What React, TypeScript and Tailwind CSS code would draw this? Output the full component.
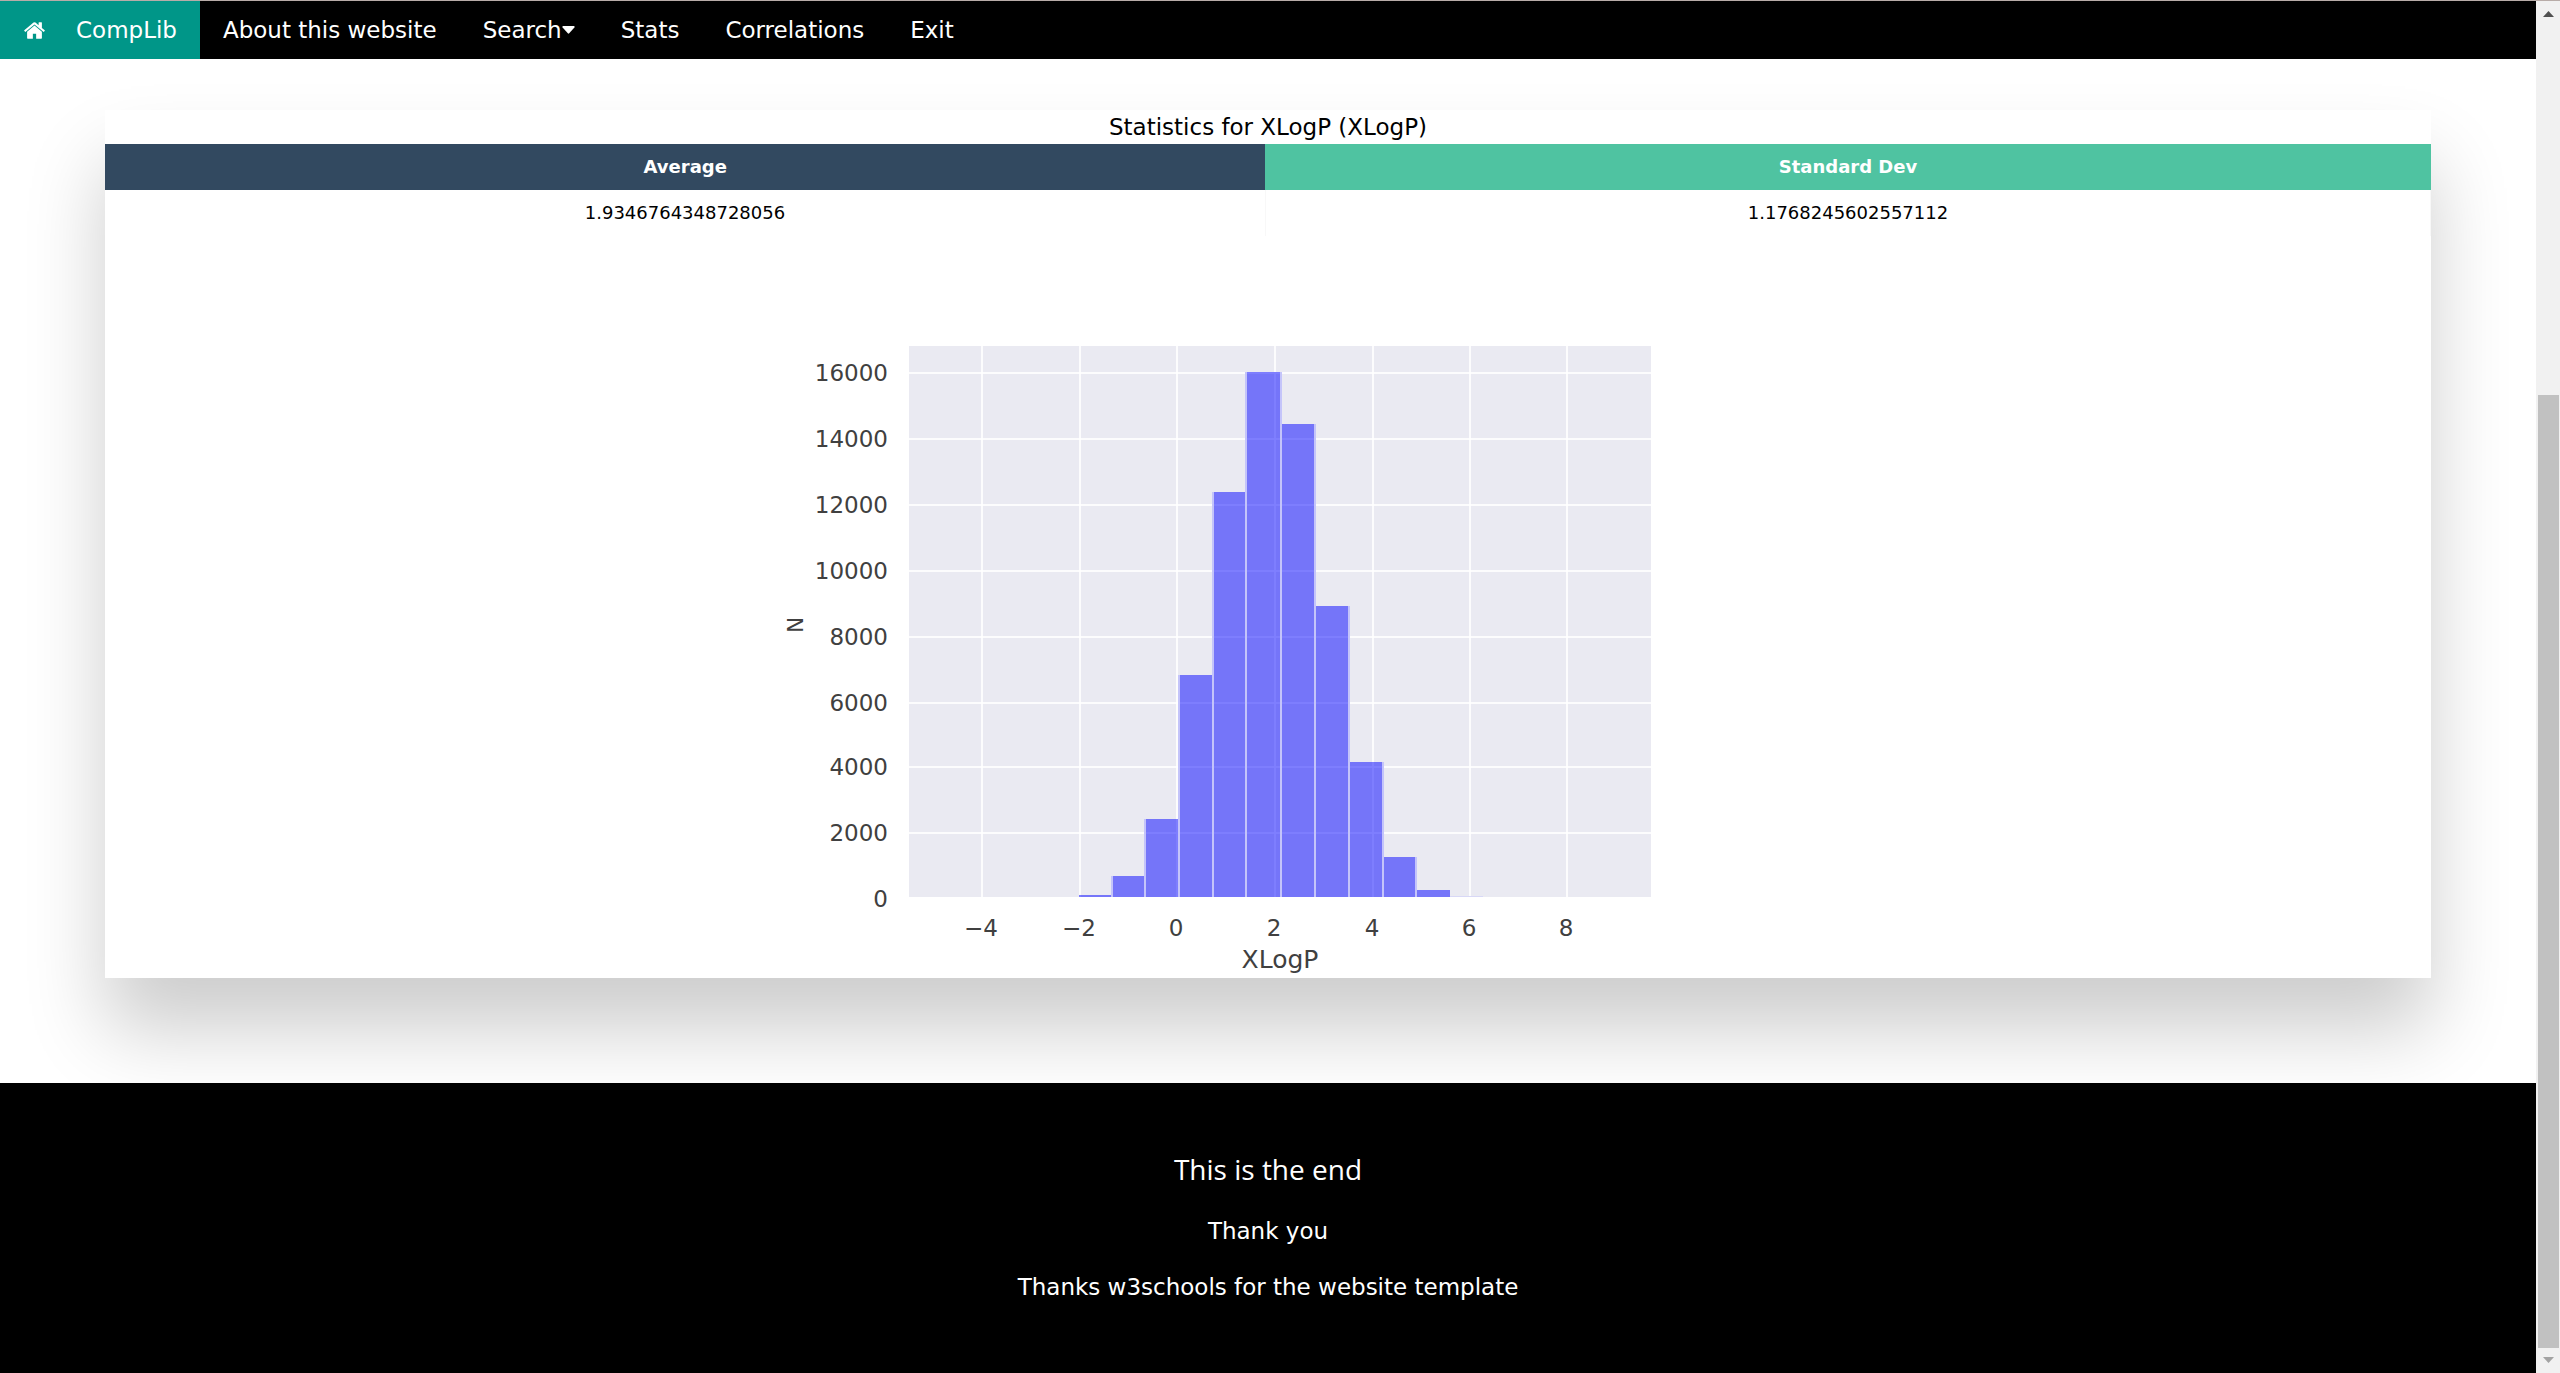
const barData = [
  { left: 291, right: 324, top: 636 },
  { left: 324, right: 357, top: 617 },
  { left: 357, right: 391, top: 560 },
  { left: 391, right: 425, top: 416 },
  { left: 425, right: 458, top: 233 },
  { left: 458, right: 493, top: 113 },
  { left: 493, right: 527, top: 165 },
  { left: 527, right: 561, top: 347 },
  { left: 561, right: 595, top: 503 },
  { left: 595, right: 628, top: 598 },
  { left: 628, right: 662, top: 631 },
];

const yTicks = [
  { label: "16000", y: 114 },
  { label: "14000", y: 180 },
  { label: "12000", y: 246 },
  { label: "10000", y: 312 },
  { label: "8000", y: 378 },
  { label: "6000", y: 444 },
  { label: "4000", y: 508 },
  { label: "2000", y: 574 },
  { label: "0", y: 640 },
];

const xTicks = [
  { label: "−4", x: 194 },
  { label: "−2", x: 292 },
  { label: "0", x: 389 },
  { label: "2", x: 487 },
  { label: "4", x: 585 },
  { label: "6", x: 682 },
  { label: "8", x: 779 },
];

function HomeIcon() {
  return (
    <svg viewBox="0 0 1792 1792" className="size-[23px] fill-current" aria-hidden="true">
      <path d="M1472 992v480q0 26-19 45t-45 19h-384v-384h-256v384h-384q-26 0-45-19t-19-45v-480q0-1 .5-3t.5-3l575-474 575 474q1 2 1 6zm223-69l-62 74q-8 9-21 11h-3q-13 0-21-7l-692-577-692 577q-12 8-24 7-13-2-21-11l-62-74q-8-10-7-23.5t11-21.5l719-599q32-26 76-26t76 26l244 204v-195q0-14 9-23t23-9h192q14 0 23 9t9 23v408l219 182q10 8 11 21.5t-7 23.5z" />
    </svg>
  );
}

function Navbar() {
  return (
    <nav className="flex h-[58px] items-stretch bg-black text-white">
      <a href="#home" className="flex items-center gap-[30px] bg-[#009688] px-[23px]">
        <HomeIcon />
        CompLib
      </a>
      <a href="#about" className="flex items-center px-[23px]">About this website</a>
      <button type="button" className="flex items-center px-[23px]">
        Search
        <svg viewBox="0 0 13 8" className="h-2 w-[13px] fill-current" aria-hidden="true">
          <path d="M1 0H12Q13 0.5 12.400 1.400L7.200 7.300Q6.500 8 5.800 7.300L0.600 1.400Q0 0.500 1 0Z" />
        </svg>
      </button>
      <a href="#stats" className="flex items-center px-[23px]">Stats</a>
      <a href="#correlations" className="flex items-center px-[23px]">Correlations</a>
      <a href="#exit" className="flex items-center px-[23px]">Exit</a>
    </nav>
  );
}

function Histogram() {
  return (
    <svg viewBox="0 0 960 719" className="block h-[719px] w-[960px] overflow-visible" role="img" aria-label="Histogram of XLogP">
      <rect x="121" y="87" width="742" height="551" fill="#eaeaf2" />
      <g stroke="#ffffff" strokeWidth="2" strokeOpacity="0.85">
        {yTicks.slice(0, 8).map((t) => (
          <line key={t.label} x1="121" x2="863" y1={t.y} y2={t.y} />
        ))}
        {xTicks.map((t) => (
          <line key={t.label} x1={t.x} x2={t.x} y1="87" y2="638" />
        ))}
      </g>
      {barData.map((b) => (
        <rect key={b.left} x={b.left} y={b.top} width={b.right - b.left} height={638 - b.top} fill="#0000ff" fillOpacity="0.5" />
      ))}
      <rect x="662" y="637" width="33" height="1" fill="#d8d8f6" />
      <g stroke="#c4c4fa" strokeWidth="2">
        {barData.slice(1).map((b, i) => (
          <line key={b.left} x1={b.left} x2={b.left} y1={Math.min(b.top, barData[i].top)} y2="638" />
        ))}
      </g>
      <g fill="#404040" fontFamily="'DejaVu Sans', sans-serif" fontSize="23">
        {yTicks.map((t) => (
          <text key={t.label} x="100" y={t.y + 8} textAnchor="end">{t.label}</text>
        ))}
        {xTicks.map((t) => (
          <text key={t.label} x={t.x - 1} y="677" textAnchor="middle">{t.label}</text>
        ))}
      </g>
      <g fill="#404040" fontFamily="'DejaVu Sans', sans-serif" textAnchor="middle">
        <text x="492" y="709" fontSize="25">XLogP</text>
        <text transform="translate(15 366) rotate(-90)" fontSize="21">N</text>
      </g>
    </svg>
  );
}

function StatsCard() {
  return (
    <section className="bg-white shadow-[0_52px_75px_rgba(0,0,0,0.2)]">
      <table className="w-full table-fixed border-collapse text-center text-[18px] leading-[46px]">
        <caption className="text-[23px] leading-[34px]">Statistics for XLogP (XLogP)</caption>
        <thead>
          <tr className="text-white">
            <th scope="col" className="w-[49.9%] bg-[#324960] p-0">Average</th>
            <th scope="col" className="bg-[#4fc3a1] p-0">Standard Dev</th>
          </tr>
        </thead>
        <tbody>
          <tr>
            <td className="border-r border-[#f8f8f8] p-0">1.9346764348728056</td>
            <td className="border-r border-[#f8f8f8] p-0">1.1768245602557112</td>
          </tr>
        </tbody>
      </table>
      <div className="mt-[23px] flex justify-center">
        <Histogram />
      </div>
    </section>
  );
}

function Scrollbar() {
  return (
    <div className="sticky top-0 flex h-[calc(100vh-1px)] w-6 shrink-0 flex-col items-center bg-[#f1f1f1]" aria-hidden="true">
      <svg viewBox="0 0 24 25" className="h-[25px] w-6 shrink-0 fill-[#505050]">
        <path d="M12.500 10 18 16H7Z" />
      </svg>
      <div className="flex min-h-0 w-full grow flex-col items-center">
        <div className="grow-[369]" />
        <div className="w-[21px] grow-[954] bg-[#c1c1c1]" />
      </div>
      <svg viewBox="0 0 24 25" className="h-[25px] w-6 shrink-0 fill-[#a3a3a3]">
        <path d="M7 9H18L12.500 15Z" />
      </svg>
    </div>
  );
}

export default function App() {
  return (
    <div className="flex min-h-screen border-t border-[#b8aca8] bg-white font-['DejaVu_Sans',Verdana,sans-serif] text-[23px] leading-[34px] text-black">
      <div className="flex min-w-0 grow flex-col">
        <Navbar />
        <main className="px-[105px] pt-[51px] pb-[105px]">
          <StatsCard />
        </main>
        <footer className="relative flex grow flex-col items-center bg-black px-6 pt-16 pb-16 text-center text-white">
          <h3 className="font-['Open_Sans',sans-serif] text-[28px] leading-[45px]">This is the end</h3>
          <p className="mt-[22px]">Thank you</p>
          <p className="mt-[22px]">Thanks w3schools for the website template</p>
        </footer>
      </div>
      <Scrollbar />
    </div>
  );
}
